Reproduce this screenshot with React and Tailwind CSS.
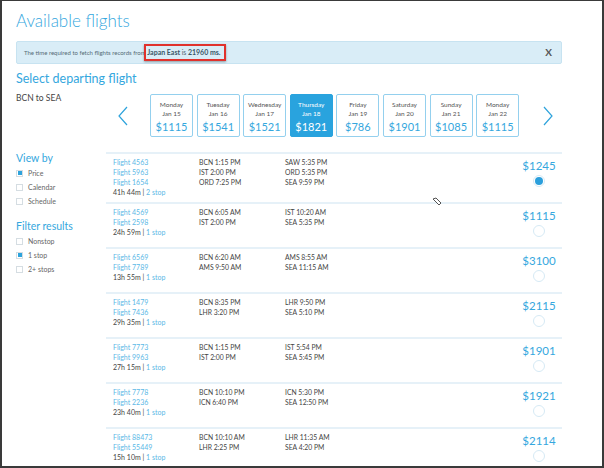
import React from "react";

const dates = [
  ["Monday", "Jan 15", "$1115"],
  ["Tuesday", "Jan 16", "$1541"],
  ["Wednesday", "Jan 17", "$1521"],
  ["Thursday", "Jan 18", "$1821"],
  ["Friday", "Jan 19", "$786"],
  ["Saturday", "Jan 20", "$1901"],
  ["Sunday", "Jan 21", "$1085"],
  ["Monday", "Jan 22", "$1115"],
];

const rows = [
  {
    flights: ["Flight 4563", "Flight 5963", "Flight 1654"],
    dep: ["BCN 1:15 PM", "IST 2:00 PM", "ORD 7:25 PM"],
    arr: ["SAW 5:35 PM", "ORD 5:35 PM", "SEA 9:59 PM"],
    dur: "41h 44m",
    stops: "2 stop",
    price: "$1245",
    selected: true,
  },
  {
    flights: ["Flight 4569", "Flight 2598"],
    dep: ["BCN 6:05 AM", "IST 2:00 PM"],
    arr: ["IST 10:20 AM", "SEA 5:35 PM"],
    dur: "24h 59m",
    stops: "1 stop",
    price: "$1115",
  },
  {
    flights: ["Flight 6569", "Flight 7789"],
    dep: ["BCN 6:20 AM", "AMS 9:50 AM"],
    arr: ["AMS 8:55 AM", "SEA 11:15 AM"],
    dur: "13h 55m",
    stops: "1 stop",
    price: "$3100",
  },
  {
    flights: ["Flight 1479", "Flight 7436"],
    dep: ["BCN 8:35 PM", "LHR 3:20 PM"],
    arr: ["LHR 9:50 PM", "SEA 5:10 PM"],
    dur: "29h 35m",
    stops: "1 stop",
    price: "$2115",
  },
  {
    flights: ["Flight 7773", "Flight 9963"],
    dep: ["BCN 1:15 PM", "IST 2:00 PM"],
    arr: ["IST 5:54 PM", "SEA 5:45 PM"],
    dur: "27h 15m",
    stops: "1 stop",
    price: "$1901",
  },
  {
    flights: ["Flight 7778", "Flight 2236"],
    dep: ["BCN 10:10 PM", "ICN 6:40 PM"],
    arr: ["ICN 5:30 PM", "SEA 12:50 PM"],
    dur: "23h 40m",
    stops: "1 stop",
    price: "$1921",
  },
  {
    flights: ["Flight 88473", "Flight 55449"],
    dep: ["BCN 10:10 AM", "LHR 2:25 PM"],
    arr: ["LHR 11:35 AM", "SEA 4:20 PM"],
    dur: "15h 10m",
    stops: "1 stop",
    price: "$2114",
  },
];

function Check({ label, checked }) {
  return (
    <div className="flex items-center h-[14px]">
      <div className="w-[7px] h-[7px] border border-[#d5dde2] flex items-center justify-center bg-white">
        {checked && <div className="w-[4px] h-[4px] bg-[#2ea3dc]" />}
      </div>
      <span className="ml-[5px] text-[7px] text-[#666]">{label}</span>
    </div>
  );
}

export default function App() {
  return (
    <div
      className="w-[604px] h-[468px] overflow-hidden bg-white border-l-2 border-t border-r-2 border-b-2 border-[#3a3a3a] box-border"
      style={{ fontFamily: "Lato, 'Open Sans', sans-serif" }}
    >
      <div className="pl-[14px] pr-[40px]">
        <h1 className="mt-[8px] text-[17px] leading-[24px] text-[#35a7de] font-light">
          Available flights
        </h1>
        <div className="relative mt-[8px] h-[23px] bg-[#d9edf7] border border-[#c7e3f1] rounded-[2px] flex items-center pl-[7px] pr-[9px] text-[6px] text-[#556b76]">
          <span>
            The time required to fetch flights records from{" "}
            <b className="font-bold text-[7px] text-[#3a5868]">Japan East</b>{" "}
            <span className="text-[7px]">is</span>{" "}
            <b className="font-bold text-[7px] text-[#3a5868]">21960 ms.</b>
          </span>
          <span className="ml-auto text-[10px] font-bold text-[#555]">X</span>
          <div className="absolute left-[127px] top-[2px] w-[82px] h-[17px] border-2 border-[#e0322d] shadow-[0_1px_2px_rgba(0,0,0,0.35)]" />
        </div>
        <h2 className="mt-[6px] text-[12.5px] leading-[18px] text-[#35a7de] font-normal">
          Select departing flight
        </h2>

        <div className="grid grid-cols-[90px_1fr]">
          <div className="pt-[4px] text-[8.5px] text-[#444]">BCN to SEA</div>
          <div className="flex items-center mt-[6px]">
            <svg width="12" height="20" viewBox="0 0 12 20" className="ml-[11px] mr-[21px]">
              <polyline points="10,1 2,10 10,19" fill="none" stroke="#2ea3dc" strokeWidth="1.2" />
            </svg>
            <div className="flex gap-[3.6px]">
              {dates.map(([d, j, p], i) => {
                const sel = i === 3;
                return (
                  <div
                    key={i}
                    className={
                      "w-[43px] h-[43px] rounded-[2px] flex flex-col items-center border " +
                      (sel
                        ? "bg-[#29a3de] border-[#29a3de] text-white"
                        : "bg-white border-[#94d0ee] text-[#555]")
                    }
                  >
                    <div className="mt-[5px] text-[6.5px] leading-[9px]">{d}</div>
                    <div className="text-[6.5px] leading-[9px]">{j}</div>
                    <div
                      className={
                        "mt-[3px] text-[11px] leading-[12px] " +
                        (sel ? "text-white" : "text-[#35a7de]")
                      }
                    >
                      {p}
                    </div>
                  </div>
                );
              })}
            </div>
            <svg width="12" height="20" viewBox="0 0 12 20" className="ml-[23px]">
              <polyline points="2,1 10,10 2,19" fill="none" stroke="#2ea3dc" strokeWidth="1.2" />
            </svg>
          </div>

          <div className="pt-[14px]">
            <div className="text-[10.5px] leading-[14px] text-[#35a7de]">View by</div>
            <div className="mt-[1px]">
              <Check label="Price" checked />
              <Check label="Calendar" />
              <Check label="Schedule" />
            </div>
            <div className="mt-[11px] text-[10.5px] leading-[14px] text-[#35a7de]">Filter results</div>
            <div className="mt-[1px]">
              <Check label="Nonstop" />
              <Check label="1 stop" checked />
              <Check label="2+ stops" />
            </div>
          </div>

          <div className="mt-[15px] relative">
            {rows.map((r, i) => (
              <div
                key={i}
                className="flex border-t-2 border-[#e6f1f8] pt-[3px] pb-[5px]"
              >
                <div className="w-[93px] pl-[7px] text-[7px] leading-[10px]">
                  {r.flights.map((f) => (
                    <div key={f} className="text-[#5ab8e6]">{f}</div>
                  ))}
                  <div className="text-[#444]">
                    {r.dur} | <span className="text-[#5ab8e6]">{r.stops}</span>
                  </div>
                </div>
                <div className="w-[86px] text-[6.8px] leading-[10px] text-[#444]">
                  {r.dep.map((t) => (
                    <div key={t}>{t}</div>
                  ))}
                </div>
                <div className="flex-1 text-[6.8px] leading-[10px] text-[#444]">
                  {r.arr.map((t) => (
                    <div key={t}>{t}</div>
                  ))}
                </div>
                <div className="w-[44px] mr-[1px] flex flex-col items-center pb-[5px]">
                  <div className="text-[11.5px] leading-[18px] text-[#35a7de]">{r.price}</div>
                  <div className="w-[12px] h-[12px] rounded-full border border-[#d6eaf5] flex items-center justify-center">
                    {r.selected && <div className="w-[8px] h-[8px] rounded-full bg-[#2b9fdc]" />}
                  </div>
                </div>
              </div>
            ))}
            <svg width="10" height="10" viewBox="0 0 10 10" className="absolute left-[326px] top-[45px]">
              <path d="M1 2 L4 1 L9 6 L7 8 Z" fill="#fff" stroke="#555" strokeWidth="1" />
            </svg>
          </div>
        </div>
      </div>
    </div>
  );
}
